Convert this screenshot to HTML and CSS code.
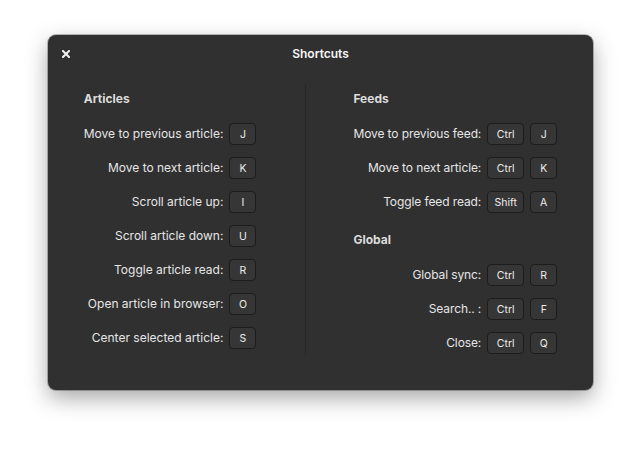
FILE: index.html
```html
<!DOCTYPE html>
<html>
<head>
<meta charset="utf-8">
<link rel="stylesheet" href="styles.css">
</head>
<body>
<div class="window">
  <div class="header">
    <span class="close">
      <svg width="8" height="8" viewBox="0 0 8 8"><path d="M1 1 L7 7 M7 1 L1 7" stroke="#f2f2f2" stroke-width="2" stroke-linecap="square"/></svg>
    </span>
    <span class="title">Shortcuts</span>
  </div>
  <div class="content">
    <div class="col col-left">
      <div class="heading">Articles</div>
      <div class="label">Move to previous article:</div><div class="key">J</div>
      <div class="label">Move to next article:</div><div class="key">K</div>
      <div class="label">Scroll article up:</div><div class="key">I</div>
      <div class="label">Scroll article down:</div><div class="key">U</div>
      <div class="label">Toggle article read:</div><div class="key">R</div>
      <div class="label">Open article in browser:</div><div class="key">O</div>
      <div class="label">Center selected article:</div><div class="key">S</div>
    </div>
    <div class="divider"></div>
    <div class="col col-right">
      <div class="heading">Feeds</div>
      <div class="label">Move to previous feed:</div><div class="key">Ctrl</div><div class="key">J</div>
      <div class="label">Move to next article:</div><div class="key">Ctrl</div><div class="key">K</div>
      <div class="label">Toggle feed read:</div><div class="key">Shift</div><div class="key">A</div>
      <div class="heading heading-second">Global</div>
      <div class="label">Global sync:</div><div class="key">Ctrl</div><div class="key">R</div>
      <div class="label">Search.. :</div><div class="key">Ctrl</div><div class="key">F</div>
      <div class="label">Close:</div><div class="key">Ctrl</div><div class="key">Q</div>
    </div>
  </div>
</div>
</body>
</html>
```

FILE: styles.css
```css
* { box-sizing: border-box; }
html, body { margin: 0; padding: 0; background: #ffffff; }
body {
  width: 641px;
  height: 452px;
  padding: 35px 0 0 48px;
  font-family: Inter, "Noto Sans", sans-serif;
  font-size: 12px;
  color: #e6e6e6;
}
.window {
  width: 545px;
  height: 355px;
  background: #303030;
  border-radius: 8px;
  box-shadow: 0 8px 22px rgba(0,0,0,0.35), 0 0 0 1px rgba(0,0,0,0.25);
  display: flex;
  flex-direction: column;
}
.header {
  height: 36px;
  display: flex;
  align-items: center;
  justify-content: center;
  position: relative;
}
.close {
  position: absolute;
  left: 14px;
  top: 15px;
  width: 8px;
  height: 8px;
  display: flex;
}
.title {
  font-weight: 600;
  color: #f5f5f5;
  font-size: 12px;
}
.content {
  display: flex;
  justify-content: center;
  padding-top: 13px;
}
.divider {
  width: 1px;
  background: #262626;
  margin: 0 47px 0 49px;
  height: 271px;
}
.col {
  display: grid;
  row-gap: 12px;
  column-gap: 6px;
  align-items: center;
  align-content: start;
  padding-top: 5px;
}
.col-left { grid-template-columns: auto 27px; }
.col-right { grid-template-columns: auto 37px 27px; letter-spacing: -0.1px; }
.heading {
  grid-column: 1 / -1;
  font-weight: 700;
  color: #dcdcdc;
  line-height: 20px;
  margin-bottom: 2px;
  letter-spacing: 0;
}
.heading-second { margin-top: 5px; }
.label {
  text-align: right;
  white-space: nowrap;
  line-height: 22px;
}
.key {
  height: 22px;
  border: 1px solid #1c1c1c;
  border-radius: 4px;
  background: #363636;
  font-size: 10.5px;
  letter-spacing: 0;
  display: flex;
  align-items: center;
  justify-content: center;
  color: #ececec;
}
```
